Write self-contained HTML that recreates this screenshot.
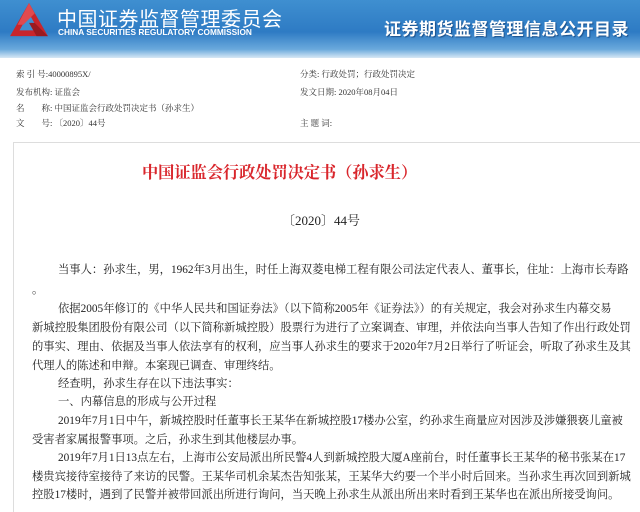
<!DOCTYPE html>
<html><head><meta charset="utf-8"><style>
*{margin:0;padding:0;box-sizing:border-box}
body{width:640px;height:501px;overflow:hidden;background:#fff;font-family:"Liberation Serif","Noto Serif CJK SC",serif;position:relative;color:#222}
.hdr{position:absolute;left:0;top:0;width:640px;height:58px;background:linear-gradient(180deg,#3f8fd0 0%,#2e7bc4 55%,#6aa9dc 85%,#d7e8f5 100%)}
.cn{position:absolute;left:57px;top:3px;font-family:"Liberation Sans","Noto Sans CJK SC",sans-serif;color:#fff;font-size:20px;letter-spacing:0.5px;white-space:nowrap}
.en{position:absolute;left:58px;top:27px;font-family:"Liberation Sans",sans-serif;color:#fff;font-size:8.3px;font-weight:bold;white-space:nowrap}
.rt{position:absolute;left:384px;top:15px;font-family:"Liberation Sans","Noto Sans CJK SC",sans-serif;font-weight:bold;color:#fff;font-size:17px;letter-spacing:0.5px;text-shadow:1px 1px 1px #1a4f8a;white-space:nowrap}
.m{position:absolute;font-size:8.5px;white-space:nowrap;color:#333;font-family:"Liberation Serif","Noto Serif CJK SC",serif}
.box{position:absolute;left:13px;top:142px;width:640px;height:370px;border-left:1px solid #ddd;border-top:1px solid #ddd}
.title{position:absolute;left:142px;top:159px;color:#d9262c;font-weight:bold;font-size:16.2px;white-space:nowrap;font-family:"Liberation Serif","Noto Serif CJK SC",serif}
.no{position:absolute;left:282px;top:210px;font-size:13px;white-space:nowrap}
.l{position:absolute;font-size:11.3px;white-space:nowrap;line-height:14px}
</style></head><body>
<div class="hdr">
<svg style="position:absolute;left:9px;top:2px" width="40" height="36" viewBox="0 0 42 38">
<polygon points="21,1 41,36 1,36" fill="#c8252c"/>
<polygon points="21,12 31,30 11,30" fill="#3f8fd0"/>
<polygon points="21,1 27,12 15,24 9,24" fill="#e04a4f"/>
<polygon points="41,36 29,36 21,22 27,22" fill="#9a1a20"/>
</svg>
<div class="cn">中国证券监督管理委员会</div>
<div class="en">CHINA SECURITIES REGULATORY COMMISSION</div>
<div class="rt">证券期货监督管理信息公开目录</div>
</div>
<div class="m" style="left:16px;top:68px">索 引 号:40000895X/</div>
<div class="m" style="left:16px;top:86px">发布机构: 证监会</div>
<div class="m" style="left:16px;top:102px">名　　称: 中国证监会行政处罚决定书（孙求生）</div>
<div class="m" style="left:16px;top:117px">文　　号: 〔2020〕44号</div>
<div class="m" style="left:300px;top:68px">分类: 行政处罚；行政处罚决定</div>
<div class="m" style="left:300px;top:86px">发文日期: 2020年08月04日</div>
<div class="m" style="left:300px;top:117px">主 题 词:</div>
<div class="box"></div>
<div class="title">中国证监会行政处罚决定书（孙求生）</div>
<div class="no">〔2020〕44号</div>
<div class="l" style="left:58px;top:263px">当事人：孙求生，男，1962年3月出生，时任上海双菱电梯工程有限公司法定代表人、董事长，住址：上海市长寿路</div>
<div class="l" style="left:32px;top:283px">。</div>
<div class="l" style="left:58px;top:302px">依据2005年修订的《中华人民共和国证券法》（以下简称2005年《证券法》）的有关规定，我会对孙求生内幕交易</div>
<div class="l" style="left:32px;top:321px">新城控股集团股份有限公司（以下简称新城控股）股票行为进行了立案调查、审理，并依法向当事人告知了作出行政处罚</div>
<div class="l" style="left:32px;top:340px">的事实、理由、依据及当事人依法享有的权利，应当事人孙求生的要求于2020年7月2日举行了听证会，听取了孙求生及其</div>
<div class="l" style="left:32px;top:359px">代理人的陈述和申辩。本案现已调查、审理终结。</div>
<div class="l" style="left:58px;top:377px">经查明，孙求生存在以下违法事实：</div>
<div class="l" style="left:58px;top:395px">一、内幕信息的形成与公开过程</div>
<div class="l" style="left:58px;top:414px">2019年7月1日中午，新城控股时任董事长王某华在新城控股17楼办公室，约孙求生商量应对因涉及涉嫌猥亵儿童被</div>
<div class="l" style="left:32px;top:433px">受害者家属报警事项。之后，孙求生到其他楼层办事。</div>
<div class="l" style="left:58px;top:451px">2019年7月1日13点左右，上海市公安局派出所民警4人到新城控股大厦A座前台，时任董事长王某华的秘书张某在17</div>
<div class="l" style="left:32px;top:470px">楼贵宾接待室接待了来访的民警。王某华司机余某杰告知张某，王某华大约要一个半小时后回来。当孙求生再次回到新城</div>
<div class="l" style="left:32px;top:488px">控股17楼时，遇到了民警并被带回派出所进行询问，当天晚上孙求生从派出所出来时看到王某华也在派出所接受询问。</div>
</body></html>
